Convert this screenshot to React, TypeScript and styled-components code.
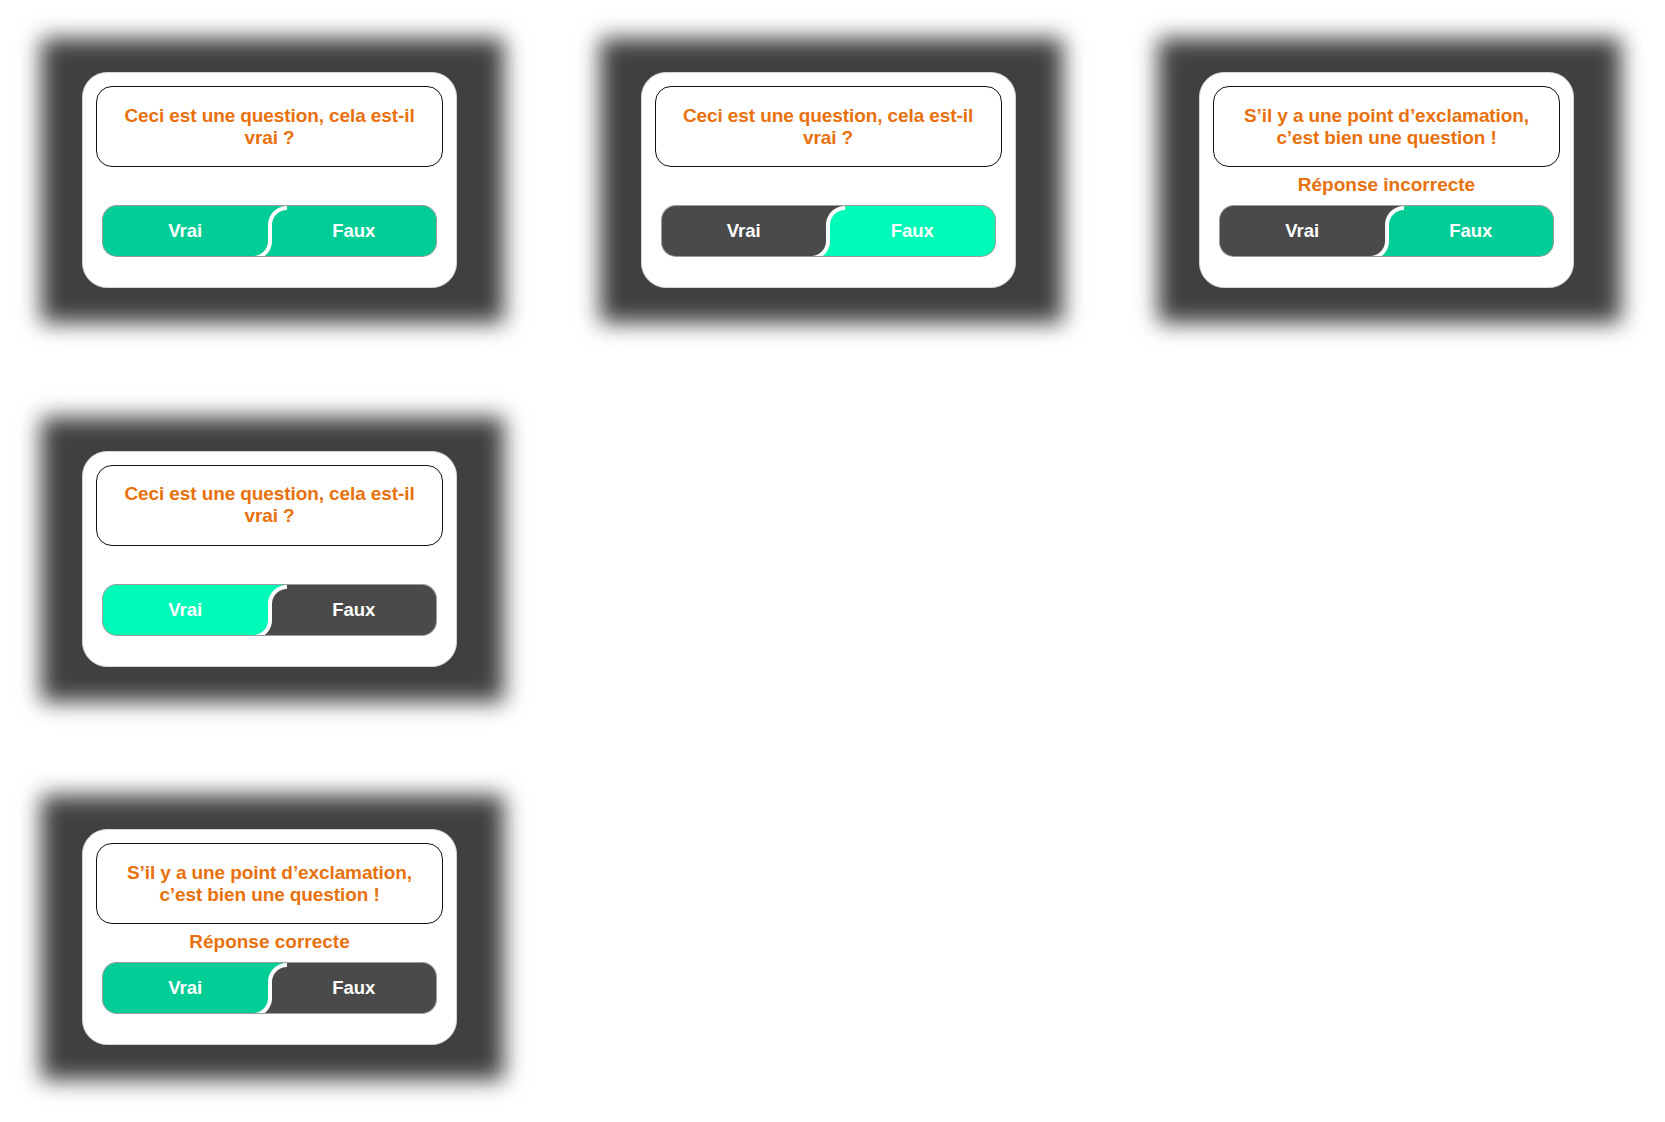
import React from 'react';
import styled, { createGlobalStyle } from 'styled-components';

const GREEN = '#02cd97';
const BRIGHT = '#00fbb9';
const DARK = '#4a4a4a';
const ORANGE = '#e8710d';

type Tone = 'green' | 'bright' | 'dark';

const toneColor: Record<Tone, string> = {
  green: GREEN,
  bright: BRIGHT,
  dark: DARK,
};

const GlobalStyle = createGlobalStyle`
  html, body {
    margin: 0;
    padding: 0;
    background: #ffffff;
  }
  body {
    font-family: "Liberation Sans", Arial, Helvetica, sans-serif;
  }
`;

const Page = styled.div`
  min-height: 1122px;
  box-sizing: border-box;
  padding: 38px 0 40px 41px;
`;

const Grid = styled.div`
  display: grid;
  grid-template-columns: repeat(3, 463px);
  column-gap: 95.5px;
  row-gap: 93.5px;
  align-items: start;
`;

// dark blurred backdrop behind each card
const Frame = styled.div<{ $newRow?: boolean }>`
  position: relative;
  box-sizing: border-box;
  width: 463px;
  height: 285px;
  padding: 34px 47px 35px 41px;
  grid-column: ${(p) => (p.$newRow ? '1' : 'auto')};

  &::before {
    content: '';
    position: absolute;
    inset: 0;
    background: #404040;
    filter: blur(11px);
  }
`;

const Card = styled.div`
  position: relative;
  box-sizing: border-box;
  width: 375px;
  height: 216px;
  padding: 13px 13px 30px;
  background: #ffffff;
  border: 1px solid #d4d4d4;
  border-radius: 25px;
  display: flex;
  flex-direction: column;
`;

const Question = styled.div`
  box-sizing: border-box;
  height: 81px;
  padding: 0 18px;
  border: 1px solid #111;
  border-radius: 16px;
  display: flex;
  align-items: center;
  justify-content: center;
  text-align: center;
  color: ${ORANGE};
  font-size: 19px;
  font-weight: 700;
  line-height: 22px;
  letter-spacing: -0.1px;
`;

const Feedback = styled.div`
  height: 38px;
  display: flex;
  align-items: center;
  justify-content: center;
  padding-bottom: 3px;
  box-sizing: border-box;
  color: ${ORANGE};
  font-size: 19px;
  font-weight: 700;
`;

const ButtonRow = styled.div`
  display: flex;
  height: 52px;
  margin: 0 6px;
`;

// the white S between the two halves is drawn with radial gradients
const AnswerButton = styled.button<{ $side: 'left' | 'right'; $bg: string; $next: string }>`
  flex: 1;
  box-sizing: border-box;
  height: 52px;
  margin: 0;
  padding: ${(p) => (p.$side === 'right' ? '0 0 0 4px' : '0')};
  font-family: "Liberation Sans", Arial, Helvetica, sans-serif;
  font-size: 18.5px;
  font-weight: 700;
  color: #ffffff;
  border: 1px solid #9c9c9c;
  cursor: pointer;
  ${(p) =>
    p.$side === 'left'
      ? `
    border-right: none;
    border-radius: 15px 0 0 15px;
    background:
      radial-gradient(circle at 0 0, ${p.$bg} 14.5px, #fff 15.5px, #fff 18.5px, ${p.$next} 19.5px) right bottom / 15px 15px no-repeat,
      ${p.$bg};
  `
      : `
    border-left: none;
    border-radius: 0 15px 15px 0;
    background:
      radial-gradient(circle at 100% 100%, ${p.$bg} 14.5px, #fff 15.5px, #fff 18.5px, ${p.$next} 19.5px) left top / 19px 19px no-repeat,
      linear-gradient(#fff, #fff) 0 19px / 4px calc(100% - 34px) no-repeat,
      radial-gradient(circle at -15px 0, #fff 18.5px, ${p.$bg} 19.5px) left bottom / 4px 15px no-repeat,
      ${p.$bg};
  `}
`;

type Quiz = {
  question: string;
  feedback?: string;
  vrai: Tone;
  faux: Tone;
  newRow?: boolean;
};

const quizzes: Quiz[] = [
  { question: 'Ceci est une question, cela est-il vrai ?', vrai: 'green', faux: 'green' },
  { question: 'Ceci est une question, cela est-il vrai ?', vrai: 'dark', faux: 'bright' },
  {
    question: 'S’il y a une point d’exclamation, c’est bien une question !',
    feedback: 'Réponse incorrecte',
    vrai: 'dark',
    faux: 'green',
  },
  { question: 'Ceci est une question, cela est-il vrai ?', vrai: 'bright', faux: 'dark', newRow: true },
  {
    question: 'S’il y a une point d’exclamation, c’est bien une question !',
    feedback: 'Réponse correcte',
    vrai: 'green',
    faux: 'dark',
    newRow: true,
  },
];

function QuizCard({ quiz }: { quiz: Quiz }) {
  const vrai = toneColor[quiz.vrai];
  const faux = toneColor[quiz.faux];
  return (
    <Frame $newRow={quiz.newRow}>
      <Card>
        <Question>{quiz.question}</Question>
        <Feedback>{quiz.feedback}</Feedback>
        <ButtonRow>
          <AnswerButton $side="left" $bg={vrai} $next={faux}>
            Vrai
          </AnswerButton>
          <AnswerButton $side="right" $bg={faux} $next={vrai}>
            Faux
          </AnswerButton>
        </ButtonRow>
      </Card>
    </Frame>
  );
}

export default function App() {
  return (
    <>
      <GlobalStyle />
      <Page>
        <Grid>
          {quizzes.map((quiz, i) => (
            <QuizCard key={i} quiz={quiz} />
          ))}
        </Grid>
      </Page>
    </>
  );
}
